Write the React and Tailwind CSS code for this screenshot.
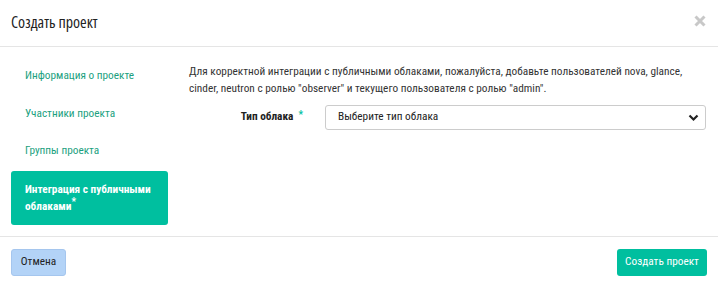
import React from "react";

export default function App() {
  return (
    <div className="w-[718px] h-[287px] bg-white flex flex-col text-[#333] font-['Roboto',sans-serif] font-stretch-condensed text-[11.3px]">
      <div className="h-[47px] flex items-center justify-between pl-[11px] pr-[12px] border-b border-[#e5e5e5]">
        <div className="text-[16px] text-[#222] -mt-[2px] font-['Open_Sans',sans-serif]">Создать проект</div>
        <svg width="12" height="12" viewBox="0 0 12 12" className="-mt-[4px]">
          <path d="M1.5 1.5 L10.5 10.5 M10.5 1.5 L1.5 10.5" stroke="#c8c8c8" strokeWidth="3" />
        </svg>
      </div>
      <div className="flex flex-1 border-b border-[#e5e5e5]">
        <div className="w-[178px] pl-[11px] pt-[16px] flex flex-col">
          <div className="pl-[14px] h-[26px] flex items-center text-[#1b9f80]">Информация о проекте</div>
          <div className="pl-[14px] h-[38px] mt-[6px] flex items-center text-[#1b9f80]">Участники проекта</div>
          <div className="pl-[14px] h-[36px] flex items-center text-[#1b9f80]">Группы проекта</div>
          <div className="w-[157px] h-[54px] mt-[2px] bg-[#00bf9f] rounded-[3px] pl-[14px] pt-[10px] text-white font-bold leading-[17px]">
            Интеграция с публичными<br />облаками<sup className="text-[10px]">*</sup>
          </div>
        </div>
        <div className="flex-1 pl-[11px] pr-[12px] pt-[16px]">
          <p className="leading-[17px] text-[#333] whitespace-nowrap">
            Для корректной интеграции с публичными облаками, пожалуйста, добавьте пользователей nova, glance,<br />
            cinder, neutron с ролью "observer" и текущего пользователя с ролью "admin".
          </p>
          <div className="flex items-center mt-[8px]">
            <div className="w-[136px] flex items-center justify-end pr-[22px] font-bold text-[#222]">
              Тип облака<span className="text-[#00bf9f] text-[10px] ml-[5px] -mt-[5px] leading-none">*</span>
            </div>
            <div className="flex-1 h-[25px] border border-[#ccc] rounded-[3px] flex items-center justify-between pl-[12px] pr-[6px] text-[#222]">
              <span>Выберите тип облака</span>
              <svg width="11" height="8" viewBox="0 0 11 8"><path d="M1.5 1.5 L5.5 5.5 L9.5 1.5" stroke="#222" strokeWidth="2.2" fill="none" /></svg>
            </div>
          </div>
        </div>
      </div>
      <div className="h-[50px] flex items-center justify-between px-[11px] pt-[1px]">
        <div className="h-[27px] w-[55px] rounded-[3px] bg-[#b3d3f7] border border-[#a5c6ee] flex items-center justify-center text-[#222]">Отмена</div>
        <div className="h-[27px] w-[90px] rounded-[3px] bg-[#00bf9f] flex items-center justify-center text-white">Создать проект</div>
      </div>
    </div>
  );
}
